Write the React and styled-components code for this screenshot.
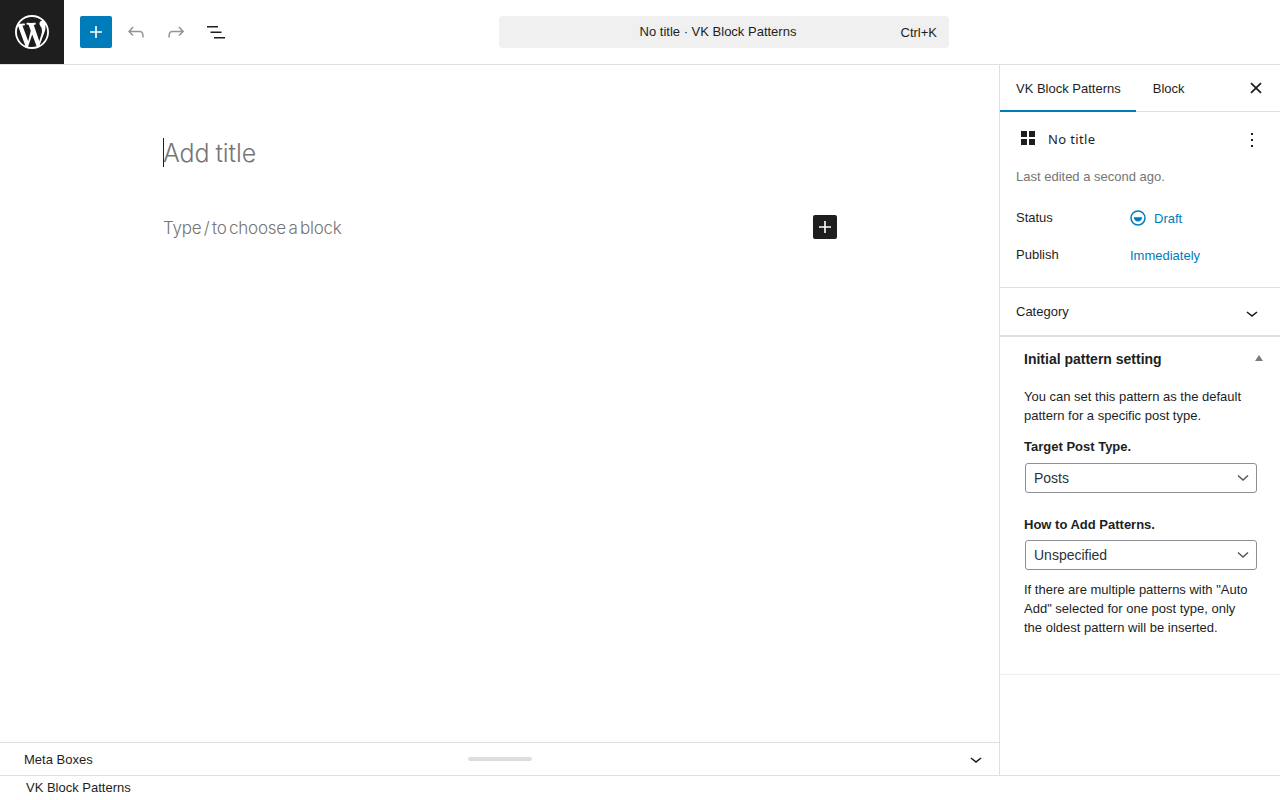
import React from 'react';
import styled, { createGlobalStyle } from 'styled-components';

const GlobalStyle = createGlobalStyle`
    html, body {
        margin: 0;
        height: 100%;
        background: #fff;
        overflow: hidden;
    }
    body {
        font-family: "Liberation Sans", Arial, sans-serif;
        font-size: 13px;
        color: #1e1e1e;
    }
    * {
        box-sizing: border-box;
    }
`;

const Icon = ({ d, size = 24, color = 'currentColor', viewBox = '0 0 24 24' }) => (
    <svg width={size} height={size} viewBox={viewBox} fill={color} aria-hidden="true">
        <path d={d} />
    </svg>
);

const plus = 'M18 11.2h-5.2V6h-1.6v5.2H6v1.6h5.2V18h1.6v-5.2H18z';
const undo = 'M18.3 11.7c-.6-.6-1.4-.9-2.3-.9H6.7l2.9-3.3-1.1-1-4.5 5L8.5 16l1-1-2.7-2.7H16c.5 0 .9.2 1.3.5 1 1 1 3.4 1 4.5v.3h1.5v-.2c0-1.5 0-4.3-1.5-5.7z';
const redo = 'M15.6 6.5l-1.1 1 2.9 3.3H8c-.9 0-1.7.3-2.3.9-1.4 1.5-1.4 4.2-1.4 5.6v.2h1.5v-.3c0-1.1 0-3.5 1-4.5.3-.3.7-.5 1.3-.5h9.2L14.5 15l1.1 1.1 4.6-4.6-4.6-5z';
const listView = 'M3 6h11v1.5H3V6zm3.5 5.5h11V13h-11v-1.5zM10 17h11v1.5H10V17z';
const closeSmall = 'M12 13.06l3.712 3.713 1.061-1.06L13.061 12l3.712-3.712-1.06-1.06L12 10.938 8.288 7.227l-1.061 1.06L10.939 12l-3.712 3.712 1.06 1.061L12 13.061z';
const chevronDown = 'M17.5 11.6L12 16l-5.5-4.4.9-1.2L12 14l4.5-3.6 1 1.2z';
const moreVertical = 'M13 19h-2v-2h2v2zm0-6h-2v-2h2v2zm0-6h-2V5h2v2z';
const wpLogo = 'M20 10c0-5.51-4.49-10-10-10C4.48 0 0 4.49 0 10c0 5.52 4.48 10 10 10 5.51 0 10-4.48 10-10zM7.78 15.37L4.37 6.22c.55-.02 1.17-.08 1.17-.08.5-.06.44-1.13-.06-1.11 0 0-1.45.11-2.37.11-.18 0-.37 0-.58-.01C4.12 2.69 6.87 1.11 10 1.11c2.33 0 4.45.87 6.05 2.34-.68-.11-1.65.39-1.65 1.58 0 .74.45 1.36.9 2.1.35.61.55 1.36.55 2.46 0 .76-.3 1.64-.68 2.87l-.89 2.98-3.23-9.62c.54-.02.85-.08.85-.08.5-.06.44-1.13-.06-1.11 0 0-1.45.11-2.37.11-.85 0-2.33-.11-2.33-.11-.5-.03-.56 1.05-.06 1.08l.92.08 1.26 3.41zM17.41 10c.24-.64.74-1.87.43-4.25.7 1.29 1.05 2.71 1.05 4.25 0 3.29-1.73 6.24-4.4 7.78.97-2.59 1.94-5.2 2.92-7.78zM6.1 18.09C3.12 16.65 1.11 13.53 1.11 10c0-1.3.23-2.48.72-3.59C3.25 10.3 4.67 14.2 6.1 18.09zm4.03-6.63l2.58 6.98c-.86.29-1.76.45-2.71.45-.79 0-1.57-.11-2.29-.33.81-2.38 1.62-4.74 2.42-7.1z';

const App = () => {
    return (
        <Page>
            <GlobalStyle />
            <TopBar>
                <LogoTile>
                    <Icon d={wpLogo} size={34} color="#fff" viewBox="0 0 20 20" />
                </LogoTile>
                <Tools>
                    <InserterButton>
                        <Icon d={plus} />
                    </InserterButton>
                    <ToolButton $muted>
                        <Icon d={undo} />
                    </ToolButton>
                    <ToolButton $muted>
                        <Icon d={redo} />
                    </ToolButton>
                    <ToolButton>
                        <Icon d={listView} />
                    </ToolButton>
                </Tools>
                <CommandBar>
                    <CommandTitle>No title · VK Block Patterns</CommandTitle>
                    <Shortcut>Ctrl+K</Shortcut>
                </CommandBar>
            </TopBar>

            <Main>
                <EditorColumn>
                    <Canvas>
                        <TitleRow>
                            <Caret />
                            <TitlePlaceholder>Add title</TitlePlaceholder>
                        </TitleRow>
                        <BlockRow>
                            <BlockPlaceholder>Type / to choose a block</BlockPlaceholder>
                            <BlockAdd>
                                <Icon d={plus} />
                            </BlockAdd>
                        </BlockRow>
                    </Canvas>
                    <MetaBar>
                        <MetaLabel>Meta Boxes</MetaLabel>
                        <DragHandle />
                        <MetaToggle>
                            <Icon d={chevronDown} />
                        </MetaToggle>
                    </MetaBar>
                </EditorColumn>

                <Sidebar>
                    <Tabs>
                        <Tab $active>VK Block Patterns</Tab>
                        <Tab>Block</Tab>
                        <CloseButton>
                            <Icon d={closeSmall} size={28} />
                        </CloseButton>
                    </Tabs>

                    <SummaryPanel>
                        <SummaryHead>
                            <GridIcon width="14" height="14" viewBox="0 0 14 14" aria-hidden="true">
                                <rect x="0" y="0" width="6" height="6" />
                                <rect x="8" y="0" width="6" height="6" />
                                <rect x="0" y="8" width="6" height="6" />
                                <rect x="8" y="8" width="6" height="6" />
                            </GridIcon>
                            <SummaryTitle>No title</SummaryTitle>
                            <MoreButton>
                                <Icon d={moreVertical} />
                            </MoreButton>
                        </SummaryHead>
                        <LastEdited>Last edited a second ago.</LastEdited>
                        <InfoRow $top={24}>
                            <InfoLabel>Status</InfoLabel>
                            <InfoValue>
                                <DraftIcon width="16" height="16" viewBox="0 0 16 16" aria-hidden="true">
                                    <circle cx="8" cy="8" r="7" fill="none" stroke="#007cba" strokeWidth="1.5" />
                                    <path d="M3.8 7.2h8.4a4.2 4.2 0 0 1-8.4 0z" fill="#007cba" />
                                </DraftIcon>
                                Draft
                            </InfoValue>
                        </InfoRow>
                        <InfoRow $top={20}>
                            <InfoLabel>Publish</InfoLabel>
                            <InfoValue>Immediately</InfoValue>
                        </InfoRow>
                    </SummaryPanel>

                    <CategoryRow>
                        <span>Category</span>
                        <Icon d={chevronDown} />
                    </CategoryRow>

                    <SettingPanel>
                        <SettingHead>
                            <SettingTitle>Initial pattern setting</SettingTitle>
                            <CollapseArrow />
                        </SettingHead>
                        <Paragraph>You can set this pattern as the default pattern for a specific post type.</Paragraph>
                        <FieldLabel $top={13}>Target Post Type.</FieldLabel>
                        <FakeSelect $top={7}>
                            Posts
                            <SelectChevron />
                        </FakeSelect>
                        <FieldLabel $top={23}>How to Add Patterns.</FieldLabel>
                        <FakeSelect $top={6}>
                            Unspecified
                            <SelectChevron />
                        </FakeSelect>
                        <Note>If there are multiple patterns with "Auto Add" selected for one post type, only the oldest pattern will be inserted.</Note>
                    </SettingPanel>
                </Sidebar>
            </Main>

            <Footer>VK Block Patterns</Footer>
        </Page>
    );
};

const SelectChevron = () => (
    <ChevronSvg width="12" height="8" viewBox="0 0 12 8" aria-hidden="true">
        <path d="M1 1.5l5 4.5 5-4.5" fill="none" stroke="#50575e" strokeWidth="1.5" />
    </ChevronSvg>
);

export default App;

const Page = styled.div`
    display: flex;
    flex-direction: column;
    width: 1280px;
    height: 800px;
    overflow: hidden;
`;

const TopBar = styled.header`
    display: flex;
    align-items: center;
    height: 65px;
    flex: none;
    border-bottom: 1px solid #e0e0e0;
    position: relative;
`;

const LogoTile = styled.div`
    display: flex;
    align-items: center;
    justify-content: center;
    width: 64px;
    height: 64px;
    background: #1e1e1e;
`;

const Tools = styled.div`
    display: flex;
    align-items: center;
    gap: 8px;
    margin-left: 16px;
`;

const InserterButton = styled.div`
    display: flex;
    align-items: center;
    justify-content: center;
    width: 32px;
    height: 32px;
    border-radius: 2px;
    background: #007cba;
    color: #fff;
`;

const ToolButton = styled.div`
    display: flex;
    align-items: center;
    justify-content: center;
    width: 32px;
    height: 32px;
    color: ${props => (props.$muted ? '#949494' : '#1e1e1e')};
`;

const CommandBar = styled.div`
    display: flex;
    align-items: center;
    justify-content: center;
    width: 450px;
    height: 32px;
    margin-left: 267px;
    border-radius: 4px;
    background: #f0f0f0;
    position: relative;
`;

const CommandTitle = styled.span`
    font-size: 13px;
    color: #1e1e1e;
    position: relative;
    top: -1px;
    left: -6px;
`;

const Shortcut = styled.span`
    position: absolute;
    right: 12px;
    top: 9px;
    font-size: 13px;
    color: #1e1e1e;
`;

const Main = styled.div`
    display: flex;
    flex: 1;
    min-height: 0;
    border-bottom: 1px solid #e0e0e0;
`;

const EditorColumn = styled.main`
    display: flex;
    flex-direction: column;
    width: 999px;
    flex: none;
`;

const Canvas = styled.div`
    flex: 1;
    padding: 73px 162px 0 163px;
`;

const TitleRow = styled.div`
    display: flex;
    align-items: center;
    height: 29px;
    position: relative;
`;

const Caret = styled.span`
    position: absolute;
    left: 0;
    top: 0;
    width: 1px;
    height: 29px;
    background: #1e1e1e;
`;

const TitlePlaceholder = styled.span`
    font-family: Inter, sans-serif;
    font-size: 25px;
    font-weight: 300;
    letter-spacing: -0.1px;
    word-spacing: -1px;
    color: #757575;
`;

const BlockRow = styled.div`
    display: flex;
    align-items: center;
    justify-content: space-between;
    height: 24px;
    margin-top: 48px;
`;

const BlockPlaceholder = styled.span`
    font-family: Inter, sans-serif;
    font-size: 17px;
    font-weight: 300;
    letter-spacing: -0.25px;
    word-spacing: -2px;
    color: #757575;
    position: relative;
    top: 1px;
`;

const BlockAdd = styled.div`
    display: flex;
    align-items: center;
    justify-content: center;
    width: 24px;
    height: 24px;
    border-radius: 2px;
    background: #1e1e1e;
    color: #fff;
`;

const MetaBar = styled.div`
    display: flex;
    align-items: center;
    height: 33px;
    flex: none;
    padding: 0 11px 0 24px;
    border-top: 1px solid #e0e0e0;
    position: relative;
`;

const MetaLabel = styled.span`
    font-size: 13px;
    color: #1e1e1e;
`;

const DragHandle = styled.div`
    position: absolute;
    left: 468px;
    top: 14px;
    width: 64px;
    height: 4px;
    border-radius: 2px;
    background: #ddd;
`;

const MetaToggle = styled.div`
    display: flex;
    margin-left: auto;
    color: #1e1e1e;
`;

const Sidebar = styled.aside`
    width: 281px;
    flex: none;
    border-left: 1px solid #e0e0e0;
`;

const Tabs = styled.div`
    display: flex;
    align-items: stretch;
    gap: 1px;
    height: 47px;
    border-bottom: 1px solid #e0e0e0;
    position: relative;
`;

const Tab = styled.div`
    display: flex;
    align-items: center;
    padding: ${props => (props.$active ? '0 15px 0 16px' : '0 16px')};
    height: 47px;
    font-size: 13px;
    color: #1e1e1e;
    box-shadow: ${props => (props.$active ? 'inset 0 -2px 0 #007cba' : 'none')};
`;

const CloseButton = styled.div`
    position: absolute;
    right: 10px;
    top: 9px;
    display: flex;
    color: #1e1e1e;
`;

const SummaryPanel = styled.section`
    height: 176px;
    padding: 15px 16px 0;
    border-bottom: 1px solid #e0e0e0;
`;

const SummaryHead = styled.div`
    display: flex;
    align-items: center;
    height: 24px;
`;

const GridIcon = styled.svg`
    flex: none;
    margin-left: 5px;
    margin-top: -2px;
    fill: #1e1e1e;
`;

const SummaryTitle = styled.span`
    margin-left: 13px;
    font-family: "Noto Sans", sans-serif;
    font-size: 13px;
    letter-spacing: 0.35px;
    color: #1e1e1e;
`;

const MoreButton = styled.div`
    display: flex;
    margin-left: auto;
    margin-top: 2px;
`;

const LastEdited = styled.p`
    margin: 17px 0 0;
    font-size: 13px;
    line-height: 18px;
    color: #757575;
`;

const InfoRow = styled.div`
    display: flex;
    align-items: center;
    height: 17px;
    margin-top: ${props => props.$top}px;
`;

const InfoLabel = styled.span`
    width: 114px;
    font-size: 13px;
    position: relative;
    top: -1px;
    color: #1e1e1e;
`;

const InfoValue = styled.span`
    display: flex;
    align-items: center;
    gap: 8px;
    font-size: 13px;
    color: #007cba;
`;

const DraftIcon = styled.svg`
    flex: none;
    position: relative;
    top: -1px;
`;

const CategoryRow = styled.div`
    display: flex;
    align-items: center;
    justify-content: space-between;
    height: 49px;
    padding: 0 16px;
    border-bottom: 2px solid #e0e0e0;
    font-size: 13px;
    color: #1e1e1e;

    svg {
        position: relative;
        top: 1px;
    }
`;

const SettingPanel = styled.section`
    height: 338px;
    padding: 13px 23px 0 24px;
    border-bottom: 1px solid #f0f0f0;
`;

const SettingHead = styled.div`
    display: flex;
    align-items: center;
    justify-content: space-between;
    height: 17px;
    position: relative;
`;

const SettingTitle = styled.h2`
    margin: 0;
    font-size: 14px;
    font-weight: 700;
    color: #1e1e1e;
`;

const CollapseArrow = styled.span`
    position: absolute;
    right: -6px;
    top: 5px;
    width: 0;
    height: 0;
    border-left: 4px solid transparent;
    border-right: 4px solid transparent;
    border-bottom: 6px solid #787c82;
`;

const Paragraph = styled.p`
    margin: 20px 0 0;
    font-size: 13px;
    line-height: 19px;
    color: #1e1e1e;
`;

const FieldLabel = styled.div`
    margin-top: ${props => props.$top}px;
    font-size: 13px;
    line-height: 18px;
    font-weight: 700;
    color: #1e1e1e;
`;

const FakeSelect = styled.div`
    display: flex;
    align-items: center;
    justify-content: space-between;
    width: 232px;
    height: 30px;
    margin: ${props => props.$top}px 0 0 1px;
    padding: 0 8px;
    border: 1px solid #8c8f94;
    border-radius: 3px;
    background: #fff;
    font-size: 14px;
    color: #2c3338;
`;

const ChevronSvg = styled.svg`
    flex: none;
    margin-right: -1px;
`;

const Note = styled.p`
    margin: 10px 0 0;
    max-width: 228px;
    font-size: 13px;
    line-height: 19px;
    color: #1e1e1e;
`;

const Footer = styled.footer`
    height: 24px;
    flex: none;
    padding: 4px 0 0 26px;
    font-size: 13px;
    line-height: 16px;
    color: #1e1e1e;
`;
